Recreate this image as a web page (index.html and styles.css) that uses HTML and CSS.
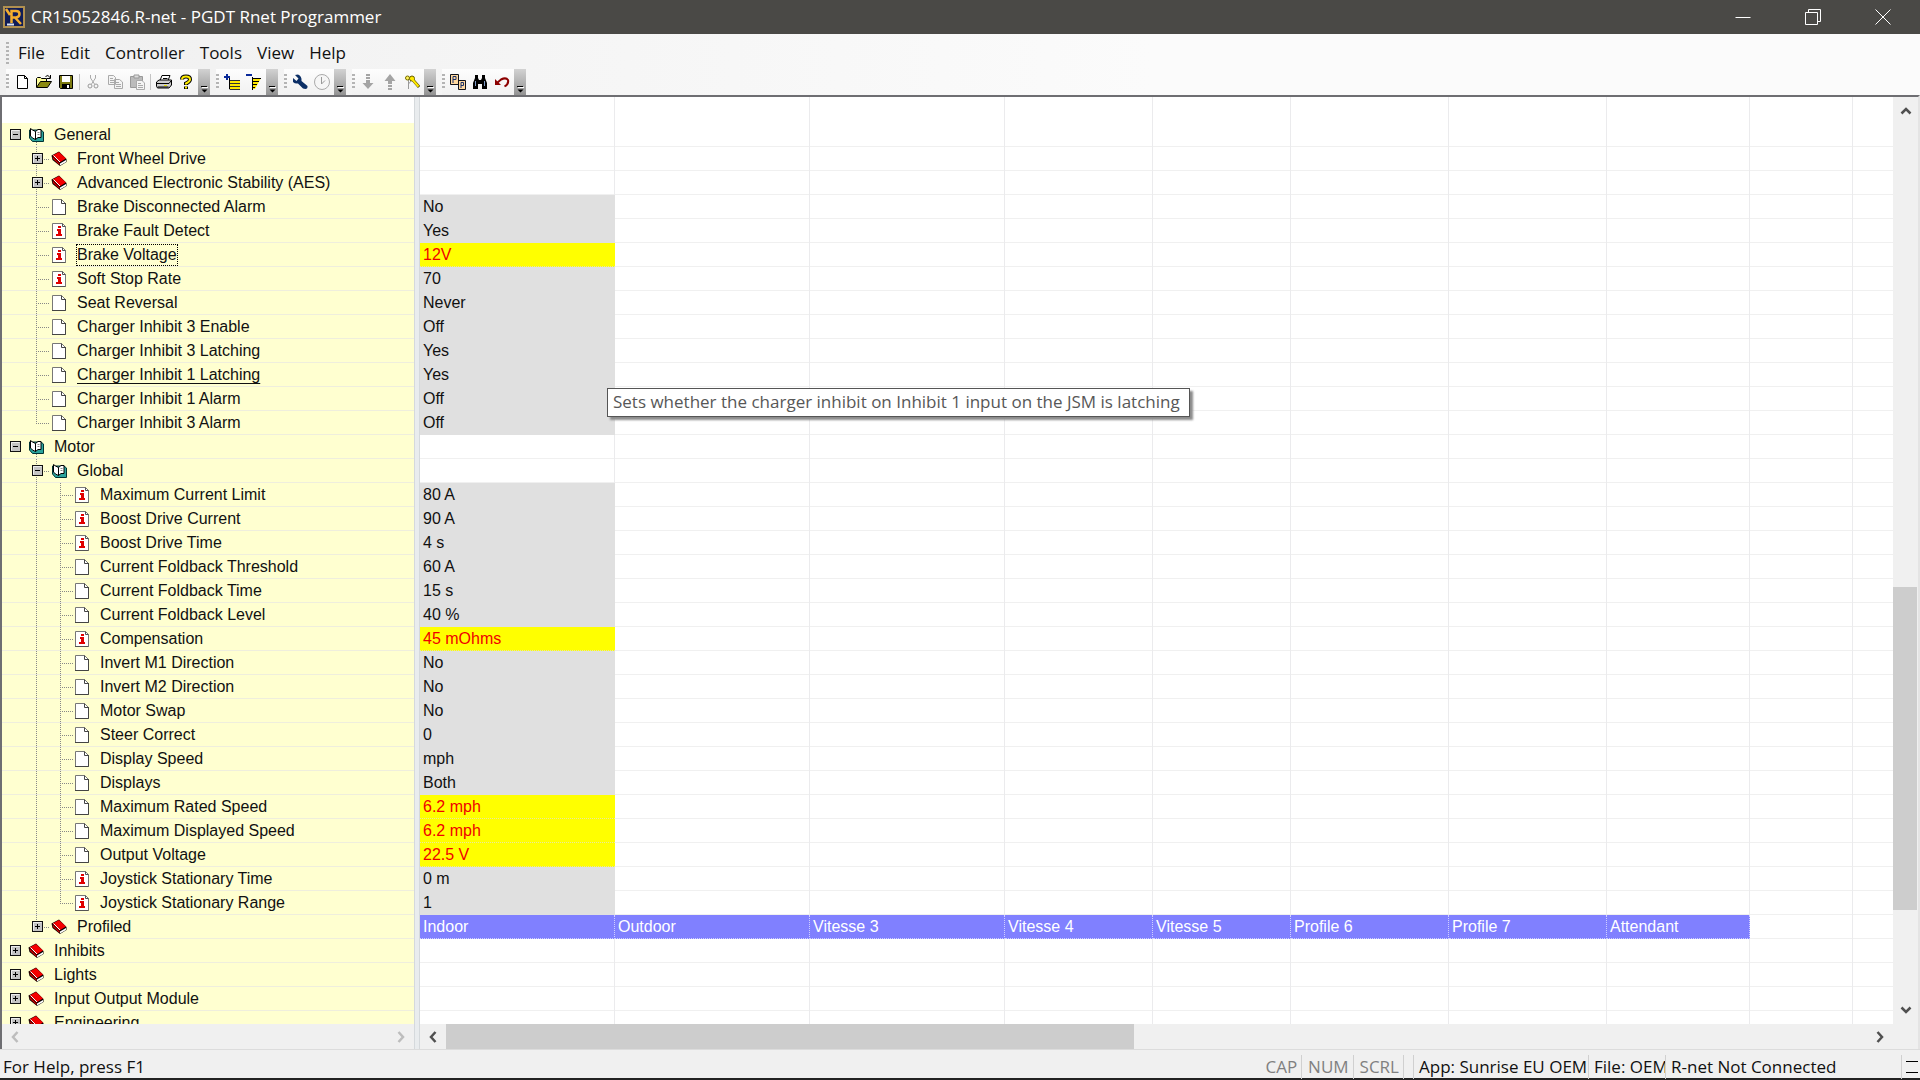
FILE: index.html
```html
<!DOCTYPE html>
<html lang="en">
<head>
<meta charset="utf-8">
<title>CR15052846.R-net - PGDT Rnet Programmer</title>
<link rel="stylesheet" href="styles.css">
</head>
<body>
<svg class="defs" aria-hidden="true">
  <symbol id="plus" viewBox="0 0 11 11"><rect x=".5" y=".5" width="10" height="10" fill="#c4c4c4" stroke="#111"/><path d="M1.5 9.5V1.5H9.5" fill="none" stroke="#eee"/><path d="M3 5.5H8M5.5 3V8" stroke="#000"/></symbol>
  <symbol id="minus" viewBox="0 0 11 11"><rect x=".5" y=".5" width="10" height="10" fill="#c4c4c4" stroke="#111"/><path d="M1.5 9.5V1.5H9.5" fill="none" stroke="#eee"/><path d="M3 5.5H8" stroke="#000"/></symbol>
  <symbol id="open" viewBox="0 0 16 16"><path d="M1.500 3V11L4.500 14.500H15.500V5L13 3Z" fill="#2aa39c" stroke="#033"/><path d="M2.500 1.500L4.500 3L7.500 4.500V12.500L4.500 11L2.500 9Z" fill="#fff" stroke="#000"/><path d="M7.500 12.500V4.500L10 2.500H13V10.500H10Z" fill="#fff" stroke="#000"/><path d="M9.500 5.500H11.500M9.500 7.500H11.500" stroke="#888"/></symbol>
  <symbol id="book" viewBox="0 0 16 16"><path d="M.5 4.500L8 .5L15.500 8V11L9 15L1.500 9Z" fill="#000"/><path d="M1.500 4.500L8 1L15 7.500L8.500 11.500Z" fill="#f40000"/><path d="M1.500 5.500L8.500 12.500V14L2 8Z" fill="#d80000"/><path d="M2.500 4.500L9 11" stroke="#fff"/><path d="M9 12.500L15 9V11L9 14.500Z" fill="#fff"/></symbol>
  <symbol id="page" viewBox="0 0 16 16"><path d="M2.500 .5H11.500L15.500 4.500V15.500H2.500Z" fill="#fff" stroke="#777"/><path d="M11.500 .5V4.500H15.500M15.500 4V15.500H2" fill="none" stroke="#444"/></symbol>
  <symbol id="info" viewBox="0 0 16 16"><path d="M2.500 .5H12.500L15.500 3.500V15.500H2.500Z" fill="#fff" stroke="#777"/><path d="M12.500 .5V3.500H15.500M2 15.500H15.500" fill="none" stroke="#555"/><path d="M8 3H11V5H8ZM7 6H11V11H12V13H6V11H8V8H7Z" fill="#e00000"/></symbol>
  <symbol id="up" viewBox="0 0 12 12"><path d="M1.500 8.500L6 4L10.500 8.500" fill="none" stroke="currentColor" stroke-width="2.500"/></symbol>
  <symbol id="down" viewBox="0 0 12 12"><path d="M1.500 3.500L6 8L10.500 3.500" fill="none" stroke="currentColor" stroke-width="2.500"/></symbol>
  <symbol id="left" viewBox="0 0 12 12"><path d="M8.500 1L4 6L8.500 11" fill="none" stroke="currentColor" stroke-width="2.500"/></symbol>
  <symbol id="right" viewBox="0 0 12 12"><path d="M3.500 1L8 6L3.500 11" fill="none" stroke="currentColor" stroke-width="2.500"/></symbol>
  <symbol id="more" viewBox="0 0 11 26"><path d="M3 18.500H9" stroke="#fff" stroke-width="1"/><path d="M2 17.500H8" stroke="#000"/><path d="M2.500 20.500H8.500L5.500 23.500Z" fill="#000"/></symbol>
</svg>

<header class="titlebar">
  <svg class="appicon" viewBox="0 0 22 22"><rect x="1" y="1" width="20" height="20" fill="#101d58" stroke="#b09050" stroke-width="2"/><path d="M3 3L7 9M8.500 17V5H13Q16.500 5 16.500 8T13 11.500H9M12 11.500L18 18" fill="none" stroke="#f3ae2e" stroke-width="2.500"/><path d="M4 18.500H11" stroke="#dde4ee" stroke-width="2"/></svg>
  <h1>CR15052846.R-net - PGDT Rnet Programmer</h1>
  <div class="winbtns">
    <button aria-label="Minimize"><svg viewBox="0 0 16 16"><path d="M.5 8.500H15.500"/></svg></button>
    <button aria-label="Restore"><svg viewBox="0 0 16 16"><path d="M.5 3.500H12.500V15.500H.5ZM3.500 3V.5H15.500V12.500H13"/></svg></button>
    <button aria-label="Close"><svg viewBox="0 0 16 16"><path d="M.5 .5L15.500 15.500M15.500 .5L.5 15.500"/></svg></button>
  </div>
</header>

<div class="bars">
  <nav class="menubar">
    <span class="grip"></span>
    <button>File</button><button>Edit</button><button>Controller</button><button>Tools</button><button>View</button><button>Help</button>
  </nav>
  <div class="toolbars">
    <div class="toolbar">
      <span class="grip"></span>
      <button aria-label="New"><svg viewBox="0 0 16 16"><path d="M3.500 1.500H10.500L13.500 4.500V14.500H3.500Z" fill="#fff" stroke="#000"/><path d="M10.500 1.500V4.500H13.500" fill="none" stroke="#000"/></svg></button>
      <button aria-label="Open"><svg viewBox="0 0 16 16"><path d="M.5 13V4.500L1.500 3.500H4.500L5.500 4.500H10.500V7.500" fill="#ffff9a" stroke="#000"/><path d="M.5 13.500L4.500 7.500H15.500L11.500 13.500Z" fill="#8c8a10" stroke="#000"/><path d="M9.500 2.500Q12 0 14 3.500M14.500 1V4.500H11" fill="none" stroke="#000"/></svg></button>
      <button aria-label="Save"><svg viewBox="0 0 16 16"><path d="M1.500 1.500H14.500V14.500H2.500L1.500 13.500Z" fill="#7c7a10" stroke="#000"/><path d="M4 2H12V8H4Z" fill="#fff"/><path d="M4 10H12V14H4Z" fill="#000"/><path d="M9 11H11V14H9Z" fill="#fff"/></svg></button>
      <span class="sep"></span>
      <button aria-label="Cut" disabled><svg viewBox="0 0 16 16"><path d="M5.500 1V4L9.500 10M10.500 1V4L6.500 10" fill="none" stroke="#aaa"/><circle cx="5" cy="12" r="2" fill="none" stroke="#999"/><circle cx="11" cy="12" r="2" fill="none" stroke="#999"/></svg></button>
      <button aria-label="Copy" disabled><svg viewBox="0 0 16 16"><path d="M1.500 1.500H6.500L8.500 3.500V10.500H1.500ZM7.500 5.500H12.500L15.500 8V14.500H7.500Z" fill="#f4f4f4" stroke="#aaa"/><path d="M3 4.500H6M3 6.500H7M3 8.500H7M9 8.500H12M9 10.500H14M9 12.500H14" stroke="#aaa"/></svg></button>
      <button aria-label="Paste" disabled><svg viewBox="0 0 16 16"><path d="M1.500 2.500H13.500V13.500H1.500Z" fill="#bbb" stroke="#999"/><path d="M5 1H10V4H5Z" fill="#ddd" stroke="#999"/><path d="M7.500 6.500H13L15.500 9V15.500H7.500Z" fill="#f4f4f4" stroke="#aaa"/><path d="M9 9.500H12M9 11.500H14M9 13.500H14" stroke="#aaa"/></svg></button>
      <span class="sep"></span>
      <button aria-label="Print"><svg viewBox="0 0 16 16"><path d="M4 6.500L6 1.500H14L12 6.500Z" fill="#fff" stroke="#000"/><path d="M.5 8L3 6H15.500V11L13 14H1.500L.5 12Z" fill="#ccc" stroke="#000"/><path d="M1 9.500H13L15 7M2 13H12.500M7 4.500H11.500" fill="none" stroke="#000"/><path d="M8 11.500H11" stroke="#e8e000"/></svg></button>
      <button aria-label="Help"><svg viewBox="0 0 16 16"><path d="M4 5.500Q4 2.500 8 2.500T12 5.500Q12 7.500 8 9.500V11M8 12.500V15" fill="none" stroke="#000" stroke-width="4"/><path d="M4 5.500Q4 2.500 8 2.500T12 5.500Q12 7.500 8 9.500V10.500M8 12.500V14.500" fill="none" stroke="#ffec00" stroke-width="2"/></svg></button>
      <button class="more" aria-label="More"><svg><use href="#more"/></svg></button>
    </div>
    <div class="toolbar">
      <span class="grip"></span>
      <button aria-label="Expand"><svg viewBox="0 0 16 16"><path d="M0 3H6M3 0V6" stroke="#0a2a9a" stroke-width="2"/><path d="M5.500 4V15H16" fill="none" stroke="#000"/><path d="M6 6H16V15H6Z" fill="#ffe900"/><path d="M6 6.500H16M6 9.500H16M6 12.500H16M6 15.500H16" stroke="#333" /></svg></button>
      <button aria-label="Collapse"><svg viewBox="0 0 16 16"><path d="M0 1H6" stroke="#0a2a9a" stroke-width="2"/><path d="M6 4H15L9 15H6Z" fill="#ffe900"/><path d="M6.500 3V16M6 4.500H15M6 7.500H13M6 10.500H11M6 13.500H9" stroke="#000"/></svg></button>
      <button class="more" aria-label="More"><svg><use href="#more"/></svg></button>
    </div>
    <div class="toolbar">
      <span class="grip"></span>
      <button aria-label="Configure"><svg viewBox="0 0 16 16"><path d="M3 1L6.500 4.500L4.500 7L1 4V8Q3 10 6 9.500L11 14.500Q16 16 15.500 12L9.500 7Q10 2 6 .5Z" fill="#0c2f66"/></svg></button>
      <button aria-label="Timer" disabled><svg viewBox="0 0 16 16"><circle cx="8" cy="8" r="7.500" fill="#f6f6f6" stroke="#aaa"/><path d="M7.500 3V10L11 6.500" fill="none" stroke="#999"/></svg></button>
      <button class="more" aria-label="More"><svg><use href="#more"/></svg></button>
    </div>
    <div class="toolbar">
      <span class="grip"></span>
      <button aria-label="Read" disabled><svg viewBox="0 0 16 16"><path d="M6 0H10V2H6ZM6 3H10V5H6ZM6 6H10V9H13.500L8 15L2.500 9H6Z" fill="#a4a4a4"/></svg></button>
      <button aria-label="Write" disabled><svg viewBox="0 0 16 16"><path d="M6 16H10V14H6ZM6 13H10V11H6ZM6 10H10V7H13.500L8 0L2.500 7H6Z" fill="#a4a4a4"/></svg></button>
      <button aria-label="Keys"><svg viewBox="0 0 16 16"><path d="M4.500 5V15M4.500 10L7 7" stroke="#999" fill="none"/><circle cx="3.500" cy="4" r="2" fill="#fff45a" stroke="#776b00"/><path d="M9 6L15 13" stroke="#554c00" stroke-width="3"/><circle cx="8" cy="4.500" r="2.500" fill="#ffe900" stroke="#665c00"/><path d="M8 5L14.500 12.500" stroke="#ffe900" stroke-width="2"/></svg></button>
      <button class="more" aria-label="More"><svg><use href="#more"/></svg></button>
    </div>
    <div class="toolbar">
      <span class="grip"></span>
      <button aria-label="Parameters"><svg viewBox="0 0 16 16"><path d="M.5 .5H8.500V10.500H.5ZM8.500 6.500H15.500V15.500H8.500Z" fill="#ffd9a0" stroke="#10131c"/><path d="M3 9V2.500H6V5.500H3M11 14V8.500H13.500V11.500H11" fill="none" stroke="#18306c"/></svg></button>
      <button aria-label="Find"><svg viewBox="0 0 16 16"><path d="M3 1H6V4L7 6H9L10 4V1H13V4L15 9V15H10V10H6V15H1V9L3 4Z" fill="#000"/><path d="M3.500 7V12M12.500 7V12" stroke="#7d9ac4"/></svg></button>
      <button aria-label="Undo"><svg viewBox="0 0 16 16"><path d="M3 9L7 5.500Q12 3 14 6Q15 10 10.500 12.500" fill="none" stroke="#8c0000" stroke-width="2"/><path d="M1 5V11H7Z" fill="#8c0000"/></svg></button>
      <button class="more" aria-label="More"><svg><use href="#more"/></svg></button>
    </div>
  </div>
</div>

<main class="workspace">
  <section class="treepane">
    <ul class="tree">
      <li><div class="row opened"><svg class="box"><use href="#minus"/></svg><svg class="ic"><use href="#open"/></svg><span>General</span></div>
        <ul class="l1">
          <li><div class="row"><svg class="box"><use href="#plus"/></svg><svg class="ic"><use href="#book"/></svg><span>Front Wheel Drive</span></div></li>
          <li><div class="row"><svg class="box"><use href="#plus"/></svg><svg class="ic"><use href="#book"/></svg><span>Advanced Electronic Stability (AES)</span></div></li>
          <li><div class="row leaf"><svg class="ic"><use href="#page"/></svg><span>Brake Disconnected Alarm</span></div></li>
          <li><div class="row leaf"><svg class="ic"><use href="#info"/></svg><span>Brake Fault Detect</span></div></li>
          <li><div class="row leaf"><svg class="ic"><use href="#info"/></svg><span class="focused">Brake Voltage</span></div></li>
          <li><div class="row leaf"><svg class="ic"><use href="#info"/></svg><span>Soft Stop Rate</span></div></li>
          <li><div class="row leaf"><svg class="ic"><use href="#page"/></svg><span>Seat Reversal</span></div></li>
          <li><div class="row leaf"><svg class="ic"><use href="#page"/></svg><span>Charger Inhibit 3 Enable</span></div></li>
          <li><div class="row leaf"><svg class="ic"><use href="#page"/></svg><span>Charger Inhibit 3 Latching</span></div></li>
          <li><div class="row leaf"><svg class="ic"><use href="#page"/></svg><span class="hot">Charger Inhibit 1 Latching</span></div></li>
          <li><div class="row leaf"><svg class="ic"><use href="#page"/></svg><span>Charger Inhibit 1 Alarm</span></div></li>
          <li><div class="row leaf"><svg class="ic"><use href="#page"/></svg><span>Charger Inhibit 3 Alarm</span></div></li>
        </ul>
      </li>
      <li><div class="row opened"><svg class="box"><use href="#minus"/></svg><svg class="ic"><use href="#open"/></svg><span>Motor</span></div>
        <ul class="l1">
          <li><div class="row opened"><svg class="box"><use href="#minus"/></svg><svg class="ic"><use href="#open"/></svg><span>Global</span></div>
            <ul class="l2">
              <li><div class="row leaf"><svg class="ic"><use href="#info"/></svg><span>Maximum Current Limit</span></div></li>
              <li><div class="row leaf"><svg class="ic"><use href="#info"/></svg><span>Boost Drive Current</span></div></li>
              <li><div class="row leaf"><svg class="ic"><use href="#info"/></svg><span>Boost Drive Time</span></div></li>
              <li><div class="row leaf"><svg class="ic"><use href="#page"/></svg><span>Current Foldback Threshold</span></div></li>
              <li><div class="row leaf"><svg class="ic"><use href="#page"/></svg><span>Current Foldback Time</span></div></li>
              <li><div class="row leaf"><svg class="ic"><use href="#page"/></svg><span>Current Foldback Level</span></div></li>
              <li><div class="row leaf"><svg class="ic"><use href="#info"/></svg><span>Compensation</span></div></li>
              <li><div class="row leaf"><svg class="ic"><use href="#page"/></svg><span>Invert M1 Direction</span></div></li>
              <li><div class="row leaf"><svg class="ic"><use href="#page"/></svg><span>Invert M2 Direction</span></div></li>
              <li><div class="row leaf"><svg class="ic"><use href="#page"/></svg><span>Motor Swap</span></div></li>
              <li><div class="row leaf"><svg class="ic"><use href="#page"/></svg><span>Steer Correct</span></div></li>
              <li><div class="row leaf"><svg class="ic"><use href="#page"/></svg><span>Display Speed</span></div></li>
              <li><div class="row leaf"><svg class="ic"><use href="#page"/></svg><span>Displays</span></div></li>
              <li><div class="row leaf"><svg class="ic"><use href="#page"/></svg><span>Maximum Rated Speed</span></div></li>
              <li><div class="row leaf"><svg class="ic"><use href="#page"/></svg><span>Maximum Displayed Speed</span></div></li>
              <li><div class="row leaf"><svg class="ic"><use href="#page"/></svg><span>Output Voltage</span></div></li>
              <li><div class="row leaf"><svg class="ic"><use href="#info"/></svg><span>Joystick Stationary Time</span></div></li>
              <li><div class="row leaf"><svg class="ic"><use href="#info"/></svg><span>Joystick Stationary Range</span></div></li>
            </ul>
          </li>
          <li><div class="row"><svg class="box"><use href="#plus"/></svg><svg class="ic"><use href="#book"/></svg><span>Profiled</span></div></li>
        </ul>
      </li>
      <li><div class="row"><svg class="box"><use href="#plus"/></svg><svg class="ic"><use href="#book"/></svg><span>Inhibits</span></div></li>
      <li><div class="row"><svg class="box"><use href="#plus"/></svg><svg class="ic"><use href="#book"/></svg><span>Lights</span></div></li>
      <li><div class="row"><svg class="box"><use href="#plus"/></svg><svg class="ic"><use href="#book"/></svg><span>Input Output Module</span></div></li>
      <li><div class="row"><svg class="box"><use href="#plus"/></svg><svg class="ic"><use href="#book"/></svg><span>Engineering</span></div></li>
    </ul>
    <div class="hscroll">
      <button aria-label="Scroll tree left" disabled><svg><use href="#left"/></svg></button>
      <span class="track"></span>
      <button aria-label="Scroll tree right" disabled><svg><use href="#right"/></svg></button>
    </div>
  </section>
  <div class="splitter"></div>
  <section class="gridpane">
    <div class="gridview">
      <table class="grid">
        <colgroup><col class="w195"><col class="w195"><col class="w195"><col class="w148"><col class="w138"><col class="w158"><col class="w158"><col class="w143"><col></colgroup>
        <tbody>
          <tr><td></td></tr><tr><td></td></tr><tr><td></td></tr>
          <tr><td class="v">No</td></tr>
          <tr><td class="v">Yes</td></tr>
          <tr><td class="v changed">12V</td></tr>
          <tr><td class="v">70</td></tr>
          <tr><td class="v">Never</td></tr>
          <tr><td class="v">Off</td></tr>
          <tr><td class="v">Yes</td></tr>
          <tr><td class="v">Yes</td></tr>
          <tr><td class="v">Off</td></tr>
          <tr><td class="v">Off</td></tr>
          <tr><td></td></tr><tr><td></td></tr>
          <tr><td class="v">80 A</td></tr>
          <tr><td class="v">90 A</td></tr>
          <tr><td class="v">4 s</td></tr>
          <tr><td class="v">60 A</td></tr>
          <tr><td class="v">15 s</td></tr>
          <tr><td class="v">40 %</td></tr>
          <tr><td class="v changed">45 mOhms</td></tr>
          <tr><td class="v">No</td></tr>
          <tr><td class="v">No</td></tr>
          <tr><td class="v">No</td></tr>
          <tr><td class="v">0</td></tr>
          <tr><td class="v">mph</td></tr>
          <tr><td class="v">Both</td></tr>
          <tr><td class="v changed">6.2 mph</td></tr>
          <tr><td class="v changed">6.2 mph</td></tr>
          <tr><td class="v changed">22.5 V</td></tr>
          <tr><td class="v">0 m</td></tr>
          <tr><td class="v">1</td></tr>
          <tr><th>Indoor</th><th>Outdoor</th><th>Vitesse 3</th><th>Vitesse 4</th><th>Vitesse 5</th><th>Profile 6</th><th>Profile 7</th><th>Attendant</th><td></td></tr>
        </tbody>
      </table>
    </div>
    <div class="vscroll">
      <button aria-label="Scroll up"><svg><use href="#up"/></svg></button>
      <span class="before"></span><span class="thumb"></span><span class="after"></span>
      <button aria-label="Scroll down"><svg><use href="#down"/></svg></button>
    </div>
    <div class="hscroll">
      <button aria-label="Scroll left"><svg><use href="#left"/></svg></button>
      <span class="thumb"></span><span class="after"></span>
      <button aria-label="Scroll right"><svg><use href="#right"/></svg></button>
    </div>
  </section>
  <div class="tooltip" role="tooltip">Sets whether the charger inhibit on Inhibit 1 input on the JSM is latching</div>
</main>

<footer class="status">
  <span class="msg">For Help, press F1</span>
  <span class="pane off">CAP</span>
  <span class="pane off">NUM</span>
  <span class="pane off">SCRL</span>
  <span class="pane blank"></span>
  <span class="pane app">App: Sunrise EU OEM</span>
  <span class="pane file">File: OEM</span>
  <span class="pane conn">R-net Not Connected</span>
  <svg class="size" viewBox="0 0 12 14"><path d="M0 1.500H12M0 12.500H12" stroke="#000"/></svg>
</footer>
</body>
</html>
```
FILE: styles.css
```css
* { box-sizing: border-box; }
body {
  margin: 0;
  height: 100vh;
  display: flex;
  flex-direction: column;
  overflow: hidden;
  background: #f0f0f0;
  color: #111;
  font: 17px/24px "Open Sans", "Noto Sans", sans-serif;
}
button {
  border: 0;
  padding: 0;
  background: none;
  color: inherit;
  font: inherit;
  display: flex;
  align-items: center;
  justify-content: center;
}
.defs { display: none; }

/* Title bar */
.titlebar {
  flex: none;
  height: 34px;
  display: flex;
  align-items: center;
  gap: 6px;
  padding: 0 2px 0 3px;
  background: #4a4946;
  color: #fff;
}
.titlebar h1 { flex: 1; margin: 0; font-size: 17px; font-weight: 400; }
.appicon { width: 22px; height: 22px; }
.winbtns { display: flex; }
.winbtns button { width: 70px; height: 34px; }
.winbtns svg { width: 16px; height: 16px; fill: none; stroke: #fff; }

/* Menu and toolbars */
.bars { flex: none; background: linear-gradient(to right, #f0f0f0, #fbfbfb 60%); }
.menubar { display: flex; align-items: center; height: 35px; padding: 2px 0 0 6px; }
.menubar button { padding: 0 8px 0 7px; }
.menubar .grip { margin-right: 2px; }
.grip {
  width: 3px;
  height: 22px;
  background: repeating-linear-gradient(#b4b4b4 0 2px, transparent 2px 4px);
}
.toolbars { display: flex; gap: 6px; height: 26px; padding-left: 6px; }
.toolbar {
  display: flex;
  align-items: center;
  background: linear-gradient(#fdfdfd, #f1f1f1);
}
.toolbar .grip { margin-right: 2px; height: 16px; }
.toolbar button { width: 22px; height: 26px; }
.toolbar svg { width: 16px; height: 16px; }
.toolbar .sep { width: 1px; height: 16px; margin: 0 2px; background: #c4c4c4; }
.toolbar .more { width: 12px; margin-left: 1px; background: linear-gradient(#d2d2d2, #939393); }
.toolbar .more svg { width: 11px; height: 26px; }

/* Workspace */
.workspace {
  position: relative;
  flex: 1;
  min-height: 0;
  display: flex;
  border: 2px solid #6e6e72;
  border-right-color: #e4e4e4;
  border-bottom: 0;
  font: 16px/23px "Liberation Sans", Arial, sans-serif;
}
.treepane { width: 412px; display: flex; flex-direction: column; background: #fff; }
.tree { flex: 1; min-height: 0; overflow: hidden; padding: 26px 0 0; }
.tree, .tree ul { margin: 0; list-style: none; }
.tree ul { padding: 0; }
.tree > li { background-color: #ffffd0; }
.row {
  display: flex;
  align-items: center;
  height: 24px;
  padding-left: 8px;
  border-bottom: 1px solid #efeedd;
  background-repeat: no-repeat;
}
.box { width: 11px; height: 11px; margin-right: 7px; }
.ic { width: 16px; height: 16px; margin-right: 10px; }
.l1 .box { margin-right: 8px; }
.leaf .ic { margin: 0 11px 0 18px; }
.opened { background: repeating-linear-gradient(#888 0 1px, transparent 1px 2px) 34px 100% / 1px 4px no-repeat; }
.l1 > li {
  background: repeating-linear-gradient(#888 0 1px, transparent 1px 2px) 34px 0 / 1px 100% no-repeat;
}
.l1 > li > .row {
  padding-left: 30px;
  background: repeating-linear-gradient(to right, #888 0 1px, transparent 1px 2px) 34px 12px / 14px 1px no-repeat;
}
.l2 > li {
  background: repeating-linear-gradient(#888 0 1px, transparent 1px 2px) 58px 0 / 1px 100% no-repeat;
}
.l2 > li > .row {
  padding-left: 53px;
  background: repeating-linear-gradient(to right, #888 0 1px, transparent 1px 2px) 58px 12px / 14px 1px no-repeat;
}
.l1 > li:last-child, .l2 > li:last-child { background-size: 1px 12px; }
.focused { outline: 1px dotted #000; line-height: 20px; }
.hot { text-decoration: underline; text-underline-offset: 3px; }

.splitter {
  width: 6px;
  border: solid #d5d9dc;
  border-width: 0 1px;
  background: #e9ecee;
}

.gridpane {
  flex: 1;
  min-width: 0;
  display: grid;
  grid-template: minmax(0, 1fr) 25px / minmax(0, 1fr) 25px;
  background: #f0f0f0;
}
.gridview {
  overflow: hidden;
  padding-top: 26px;
  background:
    linear-gradient(#ebebed, #ebebed) 194px 0 / 1px 100% no-repeat,
    linear-gradient(#ebebed, #ebebed) 389px 0 / 1px 100% no-repeat,
    linear-gradient(#ebebed, #ebebed) 584px 0 / 1px 100% no-repeat,
    linear-gradient(#ebebed, #ebebed) 732px 0 / 1px 100% no-repeat,
    linear-gradient(#ebebed, #ebebed) 870px 0 / 1px 100% no-repeat,
    linear-gradient(#ebebed, #ebebed) 1028px 0 / 1px 100% no-repeat,
    linear-gradient(#ebebed, #ebebed) 1186px 0 / 1px 100% no-repeat,
    linear-gradient(#ebebed, #ebebed) 1329px 0 / 1px 100% no-repeat,
    linear-gradient(#ebebed, #ebebed) 1432px 0 / 1px 100% no-repeat,
    linear-gradient(#fff, #fff) 0 0 / 100% 26px no-repeat,
    repeating-linear-gradient(#fff 0 23px, #f0f0f0 23px 24px) 0 26px no-repeat;
}
.grid { width: 100%; table-layout: fixed; border-collapse: separate; border-spacing: 0; }
.w195 { width: 195px; }
.w148 { width: 148px; }
.w138 { width: 138px; }
.w158 { width: 158px; }
.w143 { width: 143px; }
.grid td, .grid th { height: 24px; padding: 0 3px; text-align: left; font-weight: 400; white-space: nowrap; }
.grid .v { background: #e0e0e0; border-bottom: 1px solid #e0e0e0; }
.grid .changed { background: #ff0; color: #f00000; border-bottom: 1px dotted #e8e8a0; }
.grid th { background: #8080ff; color: #fff; border: dotted #d0d0ff; border-width: 0 1px 1px 0; }

/* Scroll bars */
.hscroll, .vscroll { display: flex; background: #f0f0f0; color: #505050; }
.hscroll { height: 25px; }
.hscroll button { width: 26px; height: 25px; }
.vscroll { flex-direction: column; }
.vscroll button { width: 25px; height: 28px; }
.hscroll svg, .vscroll svg { width: 12px; height: 12px; }
.hscroll button:disabled { color: #bdbdbd; }
.hscroll .track { flex: 1; }
.thumb { background: #cdcdcd; }
.hscroll .thumb { flex: 688; }
.hscroll .after { flex: 732; }
.vscroll .before { flex: 462; }
.vscroll .thumb { flex: 323; margin-right: 1px; }
.vscroll .after { flex: 86; }

.tooltip {
  position: absolute;
  left: 605px;
  top: 291px;
  padding: 1px 9px 2px 5px;
  border: 1px solid #555;
  background: #fff;
  box-shadow: 3px 3px 2px #8c8c8c;
  color: #575757;
  font: 17px/24px "Open Sans", "Noto Sans", sans-serif;
  white-space: nowrap;
}

/* Status bar */
.status {
  flex: none;
  height: 31px;
  display: flex;
  align-items: center;
  padding: 6px 2px 0 3px;
  border-top: 1px solid #dcdcdc;
  border-bottom: 2px solid #222;
  white-space: nowrap;
}
.msg { flex: 1; }
.pane { padding: 0 4px 0 5px; border-right: 1px solid #d0d0d0; overflow: hidden; }
.off { padding-left: 6px; color: #808080; }
.blank { width: 10px; height: 24px; }
.app { width: 175px; }
.file { width: 77px; }
.conn { width: 236px; }
.size { width: 12px; height: 14px; margin-left: 4px; }
```
